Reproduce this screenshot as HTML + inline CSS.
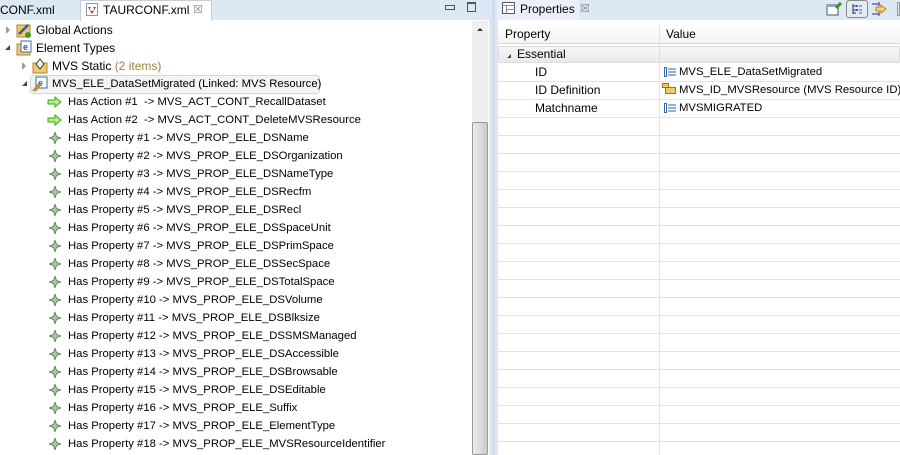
<!DOCTYPE html><html><head><style>
*{margin:0;padding:0;box-sizing:border-box}
body{width:900px;height:455px;overflow:hidden;background:#fff;font:11.3px "Liberation Sans",sans-serif;color:#000;position:relative}
.a{position:absolute;white-space:nowrap}
.row{position:absolute;height:18px;line-height:18px;white-space:nowrap}
.prow{position:absolute;left:498px;width:402px;height:18px;border-bottom:1px solid #e3e3e3;line-height:17px;overflow:hidden}
</style></head><body>
<div class="a" style="left:0;top:0;width:490px;height:20px;background:#dde8f5"></div>
<div class="a" style="left:0;top:2px;line-height:16px;font-size:12px">CONF.xml</div>
<div class="a" style="left:80px;top:0;width:132px;height:21px;background:#fff;border:1px solid #c4cfdc;border-bottom:none"></div>
<svg class="a" style="left:86px;top:3px" width="12" height="13"><rect x="0.5" y="0.5" width="11" height="12" fill="#fff" stroke="#999"/><path d="M2 4 L6 11 L10 4 Z" fill="#c0303a"/><circle cx="6" cy="6" r="2" fill="#fff"/></svg>
<div class="a" style="left:103px;top:2px;line-height:16px;font-size:12px">TAURCONF.xml</div>
<div class="a" style="left:193px;top:2px;line-height:16px;color:#888;font-size:11px">☒</div>
<div class="a" style="left:445px;top:5px;width:10px;height:5px;border:1px solid #555"></div>
<div class="a" style="left:467px;top:2px;width:9px;height:10px;border:1px solid #555;border-top-width:2px"></div>
<div class="a" style="left:472px;top:21px;width:16px;height:434px;background:#efefef"></div>
<div class="a" style="left:477px;top:28px;width:0;height:0;border-left:3px solid transparent;border-right:3px solid transparent;border-bottom:3px solid #333"></div>
<div class="a" style="left:472px;top:122px;width:16px;height:333px;background:linear-gradient(90deg,#ececec,#d8d8d8 60%,#c8c8c8);border:1px solid #999;border-radius:2px"></div>
<div class="a" style="left:489px;top:0;width:6px;height:455px;background:#dde6f2"></div>
<div class="a" style="left:492px;top:0;width:3px;height:455px;background:#d3dcec"></div>

<div class="a" style="left:6px;top:26px;width:0;height:0;border-top:4px solid transparent;border-bottom:4px solid transparent;border-left:4px solid #999"></div>
<svg class="a" style="left:16px;top:22px" width="16" height="16"><rect x="1" y="3" width="13" height="12" fill="#f1c86a" stroke="#b08830"/><path d="M3 12 L12 3" stroke="#2a5db0" stroke-width="2.5"/><circle cx="12" cy="13" r="3" fill="#3a9a3a"/></svg>
<div class="row" style="left:36px;top:21px;font-size:12px">Global Actions</div>
<div class="a" style="left:5px;top:45px;width:0;height:0;border-left:5px solid transparent;border-bottom:5px solid #444"></div>
<svg class="a" style="left:16px;top:40px" width="16" height="16"><rect x="1" y="4" width="13" height="11" fill="#f1c86a" stroke="#b08830"/><rect x="5" y="1" width="10" height="11" fill="#fff" stroke="#3a6ab0"/><text x="7" y="10" font-size="9" font-family="Liberation Sans" fill="#2a5db0" font-weight="bold">e</text></svg>
<div class="row" style="left:36px;top:39px;font-size:12px">Element Types</div>
<div class="a" style="left:22px;top:62px;width:0;height:0;border-top:4px solid transparent;border-bottom:4px solid transparent;border-left:4px solid #999"></div>
<svg class="a" style="left:32px;top:58px" width="16" height="16"><rect x="1" y="5" width="14" height="10" fill="#f1c86a" stroke="#b08830"/><path d="M8 1 L12 6 L8 11 L4 6 Z" fill="#fff" stroke="#333"/></svg>
<div class="row" style="left:52px;top:57px;font-size:12px">MVS Static <span style="color:#a08040">(2 items)</span></div>
<div class="a" style="left:30px;top:75px;width:290px;height:19px;background:#f4f4f4;border:1px solid #d6d6d6;border-radius:3px"></div>
<div class="a" style="left:22px;top:81px;width:0;height:0;border-left:5px solid transparent;border-bottom:5px solid #444"></div>
<svg class="a" style="left:32px;top:76px" width="16" height="16"><rect x="4" y="1" width="11" height="11" fill="#fff" stroke="#3a6ab0"/><text x="6" y="10" font-size="9" font-family="Liberation Sans" fill="#2a5db0" font-weight="bold">e</text><path d="M1 15 L7 8 M3 15 L9 8" stroke="#c09030" stroke-width="2"/></svg>
<div class="row" style="left:52px;top:75px">MVS_ELE_DataSetMigrated (Linked: MVS Resource)</div>

<svg class="a" style="left:47px;top:96px" width="16" height="12"><path d="M1 4 H8 V1 L14 6 L8 11 V8 H1 Z" fill="#b8ec8a" stroke="#3aa820"/></svg>
<div class="row" style="left:68px;top:93px">Has Action #1&nbsp; -&gt; MVS_ACT_CONT_RecallDataset</div>
<svg class="a" style="left:47px;top:114px" width="16" height="12"><path d="M1 4 H8 V1 L14 6 L8 11 V8 H1 Z" fill="#b8ec8a" stroke="#3aa820"/></svg>
<div class="row" style="left:68px;top:111px">Has Action #2&nbsp; -&gt; MVS_ACT_CONT_DeleteMVSResource</div>

<div id="props"></div>
<script>
var n=["DSName","DSOrganization","DSNameType","DSRecfm","DSRecl","DSSpaceUnit","DSPrimSpace","DSSecSpace","DSTotalSpace","DSVolume","DSBlksize","DSSMSManaged","DSAccessible","DSBrowsable","DSEditable","Suffix","ElementType","MVSResourceIdentifier"];
var h="";
for(var i=0;i<n.length;i++){var t=129+18*i;
h+='<svg class="a" style="left:49px;top:'+(t+3)+'px" width="12" height="12"><path d="M6 0 L7.5 4.5 L12 6 L7.5 7.5 L6 12 L4.5 7.5 L0 6 L4.5 4.5 Z" fill="#a8c8a0" stroke="#557755" stroke-width="0.8"/></svg>';
h+='<div class="row" style="left:68px;top:'+t+'px">Has Property #'+(i+1)+' -&gt; MVS_PROP_ELE_'+n[i]+'</div>';}
document.getElementById('props').innerHTML=h;
</script>

<div class="a" style="left:495px;top:0;width:405px;height:20px;background:#dde8f5"></div>
<div class="a" style="left:497px;top:0;width:82px;height:20px;background:#e9f0f9"></div>
<svg class="a" style="left:502px;top:2px" width="13" height="12"><rect x="0.5" y="0.5" width="12" height="11" fill="#fff" stroke="#556"/><path d="M0 3.5 H13 M4.5 3 V12 M4.5 7.5 H13" stroke="#889"/></svg>
<div class="a" style="left:520px;top:1px;line-height:16px;font-size:12px">Properties</div>
<div class="a" style="left:580px;top:1px;line-height:16px;color:#888;font-size:11px">☒</div>
<svg class="a" style="left:826px;top:2px" width="16" height="14"><rect x="1" y="3" width="11" height="10" fill="#fff" stroke="#555"/><rect x="1" y="3" width="11" height="2" fill="#8ab"/><path d="M10 6 L15 1" stroke="#2a9a2a" stroke-width="3"/></svg>
<div class="a" style="left:846px;top:0;width:22px;height:18px;border:1px solid #888;border-radius:3px;background:#e6ebf2"></div>
<svg class="a" style="left:851px;top:3px" width="12" height="12"><path d="M2 1 V11 M2 3 H5 M2 7 H5 M2 10 H5" stroke="#336" fill="none"/><rect x="5" y="2" width="2" height="2" fill="#36a"/><rect x="5" y="6" width="2" height="2" fill="#36a"/><path d="M8 3 H11 M8 7 H11 M8 10 H11" stroke="#36a"/></svg>
<svg class="a" style="left:871px;top:1px" width="18" height="16"><path d="M1 3 H8 M1 13 H8 M8 1 V5 M8 11 V15" stroke="#336"/><path d="M5 6 H10 V4 L15 8 L10 12 V10 H5 Z" fill="#f7d38a" stroke="#c08020"/></svg>
<div class="a" style="left:897px;top:2px;width:3px;height:14px;border:1px solid #999"></div>

<div class="a" style="left:495px;top:20px;width:405px;height:435px;background:#fff"></div>
<div class="a" style="left:495px;top:20px;width:3px;height:435px;background:#dde6f2"></div>
<div class="a" style="left:498px;top:24px;width:402px;height:20px;background:linear-gradient(#fff,#f4f4f4);border-bottom:1px solid #d8d8d8"></div>
<div class="a" style="left:505px;top:26px;line-height:16px;font-size:12px">Property</div>
<div class="a" style="left:666px;top:26px;line-height:16px;font-size:12px">Value</div>
<div class="a" style="left:659px;top:24px;width:1px;height:431px;background:#e3e3e3"></div>
<div class="a" style="left:498px;top:46px;width:402px;height:17px;background:linear-gradient(#f6f6f6,#e9e9e9);border:1px solid #ddd;border-radius:2px"></div>
<div class="a" style="left:659px;top:46px;width:1px;height:17px;background:#ddd"></div>
<div class="a" style="left:507px;top:54px;width:0;height:0;border-left:4px solid transparent;border-bottom:4px solid #444"></div>
<div class="a" style="left:517px;top:46px;line-height:17px;font-size:12px">Essential</div>

<div class="prow" style="top:64px"><span class="a" style="left:37px;font-size:12px">ID</span><span class="a" style="left:181px">MVS_ELE_DataSetMigrated</span></div>
<div class="prow" style="top:82px"><span class="a" style="left:37px;font-size:12px">ID Definition</span><span class="a" style="left:181px">MVS_ID_MVSResource (MVS Resource ID)</span></div>
<div class="prow" style="top:100px"><span class="a" style="left:37px;font-size:12px">Matchname</span><span class="a" style="left:181px">MVSMIGRATED</span></div>
<svg class="a" style="left:664px;top:67px" width="12" height="10"><rect x="0.5" y="0.5" width="2" height="9" fill="none" stroke="#36a"/><path d="M4 2 H12 M4 5 H12 M4 8 H12" stroke="#36a"/></svg>
<svg class="a" style="left:664px;top:103px" width="12" height="10"><rect x="0.5" y="0.5" width="2" height="9" fill="none" stroke="#36a"/><path d="M4 2 H12 M4 5 H12 M4 8 H12" stroke="#36a"/></svg>
<svg class="a" style="left:662px;top:83px" width="14" height="12"><rect x="0.5" y="0.5" width="6" height="4" fill="#f1c86a" stroke="#a07020"/><rect x="3.5" y="4.5" width="10" height="6" fill="#f1c86a" stroke="#a07020"/></svg>
<div id="lines"></div>
<script>
var l="";for(var y=135;y<455;y+=18){l+='<div class="a" style="left:498px;top:'+y+'px;width:402px;height:1px;background:#e3e3e3"></div>';}
document.getElementById('lines').innerHTML=l;
</script>
</body></html>
